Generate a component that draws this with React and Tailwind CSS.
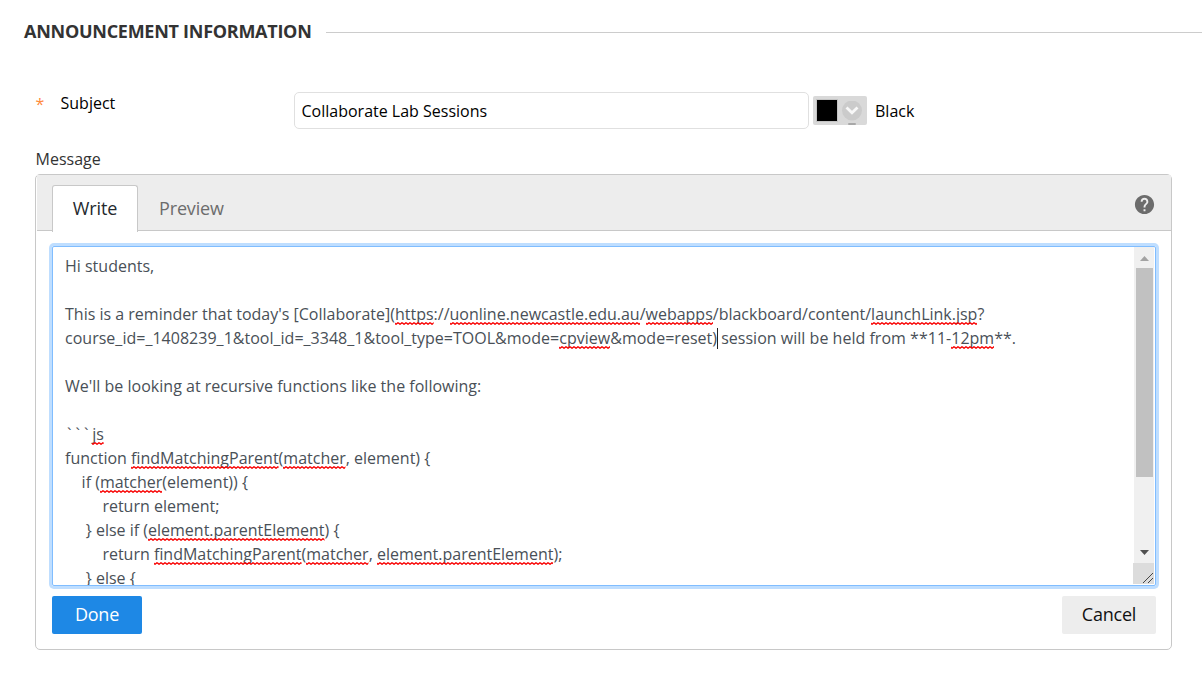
import React from "react";
import { MdHelp } from "react-icons/md";

// Each line: indent / tracking classes plus text segments; bad = flagged by the spell checker.
const bad = (t) => ({ t, bad: true });
const LINES = [
  { c: "", s: ["Hi students,"] },
  { c: "", s: [] },
  {
    c: "",
    s: ["This is a reminder that today's [Collaborate](", bad("https"), "://", bad("uonline.newcastle.edu.au"), "/", bad("webapps"), "/blackboard/content/", bad("launchLink.jsp"), "?"],
  },
  {
    c: "tracking-[0.018px]",
    s: ["course_id=_1408239_1&tool_id=_3348_1&tool_type=TOOL&mode=", bad("cpview"), "&mode=reset)", { caret: true }, " session will be held from **11-", bad("12pm"), "**."],
  },
  { c: "", s: [] },
  { c: "tracking-[0.01px]", s: ["We'll be looking at recursive functions like the following:"] },
  { c: "", s: [] },
  { c: "", s: [{ ticks: "```" }, bad("js")] },
  { c: "", s: ["function ", bad("findMatchingParent"), "(", bad("matcher"), ", element) {"] },
  { c: "pl-[16.6px]", s: ["if (", bad("matcher"), "(element)) {"] },
  { c: "pl-[37.4px]", s: ["return element;"] },
  { c: "pl-[20.8px]", s: ["} else if (", bad("element.parentElement"), ") {"] },
  { c: "pl-[37.4px]", s: ["return ", bad("findMatchingParent"), "(", bad("matcher"), ", ", bad("element.parentElement"), ");"] },
  { c: "pl-[20.8px]", s: ["} else {"] },
];

function Misspelled({ children }) {
  return (
    <span className="relative">
      {children}
      <svg className="absolute bottom-0 left-0 h-[3px] w-full" aria-hidden="true">
        <rect width="100%" height="3" fill="url(#squiggle)" />
      </svg>
    </span>
  );
}

function Segment({ seg }) {
  if (typeof seg === "string") return seg;
  if (seg.caret) return <span className="-mr-px inline-block h-[21px] w-px bg-[#222] align-[-5px]" />;
  if (seg.ticks) return <span className="pl-[2px] tracking-[4px]">{seg.ticks}</span>;
  return <Misspelled>{seg.t}</Misspelled>;
}

function Scrollbar() {
  return (
    <div className="flex w-[21px] shrink-0 flex-col items-end pr-px">
      <div className="flex h-[316px] w-[20px] flex-col items-center bg-[#f0f0f0]">
        <div className="flex h-[21px] items-center pt-[2px]">
          <svg width="9" height="5" viewBox="0 0 9 5" fill="#a3a3a3"><path d="M4.500 0 9 5H0z" /></svg>
        </div>
        <div className="h-[209px] w-[17px] bg-[#c1c1c1]" />
        <div className="mt-auto flex h-[22px] items-center pt-px">
          <svg width="9" height="5" viewBox="0 0 9 5" fill="#505050"><path d="M0 0h9L4.500 5z" /></svg>
        </div>
      </div>
      <div className="flex h-[21px] w-[21px] items-end justify-end bg-[#dcdcdc] p-px">
        <svg width="10" height="10" viewBox="0 0 10 10" stroke="#444" strokeWidth="1" shapeRendering="crispEdges">
          <path d="M0 10 10 0M5 10l5-5" />
        </svg>
      </div>
    </div>
  );
}

export default function App() {
  return (
    <div className="h-[676px] w-[1202px] overflow-hidden bg-white font-['Open_Sans',sans-serif] text-black">
      <svg className="absolute h-0 w-0" aria-hidden="true">
        <defs>
          <pattern id="squiggle" width="4" height="3" patternUnits="userSpaceOnUse">
            <path d="M-1 .5 1 2.300 3 .7 5 2.300" fill="none" stroke="#f80000" strokeWidth="1.3" />
          </pattern>
        </defs>
      </svg>

      <div className="flex items-center pl-6 pt-[18px]">
        <h2 className="w-[302px] whitespace-nowrap text-[18px] font-bold leading-[26px] tracking-[-0.27px] text-[#333]">ANNOUNCEMENT INFORMATION</h2>
        <div className="mt-[3px] h-px flex-1 bg-[#ccc]" />
      </div>

      <div className="mt-[48px] flex pl-[35px]">
        <div className="flex w-[259px] leading-[22px]">
          <span className="w-[25px] pl-[0.500px] pt-px text-[16px] text-[#ff8a3c]">*</span>
          <label className="pl-[0.500px] text-[16px]">Subject</label>
        </div>
        <div className="flex h-[37px] w-[515px] items-center rounded-[5px] border border-[#e0e0e0] pl-[6.500px] text-[16px]">Collaborate Lab Sessions</div>
        <div className="ml-1 mt-1 flex h-[29px] w-[54px] items-center rounded-[2px] bg-[#d9d9d9] pl-[3px]">
          <div className="h-[23px] w-[22px] border border-[#c4c4c4] bg-black" />
          <div className="relative ml-1">
            <svg width="20" height="20" viewBox="0 0 20 20" className="block">
              <circle cx="10" cy="9.500" r="10" fill="#cbcbcb" />
              <path d="m4.500 6.500 5.500 5.200L15.500 6.500" fill="none" stroke="#f8f8f8" strokeWidth="2.800" />
            </svg>
            <div className="absolute -bottom-[4px] left-[6px] h-[2px] w-[8px] rounded-full bg-[#a8a8a8]" />
          </div>
        </div>
        <span className="ml-2 text-[16px] leading-[38px]">Black</span>
      </div>

      <div className="mt-[17px] pl-[35.500px] text-[16px] leading-6 text-[#333]">Message</div>

      <div className="ml-[35px] mt-[3px] flex h-[476px] w-[1137px] flex-col rounded-[5px] border border-[#c8c8c8]">
        <div className="ml-px flex h-[56px] shrink-0 border-b border-[#c8c8c8] bg-[#ededed] pl-[15px] pt-[10px]">
          <div className="h-[47px] w-[86px] rounded-t-[3px] border border-b-0 border-[#c8c8c8] bg-white text-center text-[18px] leading-[44px] tracking-[-0.150px] text-[#24292e]">Write</div>
          <div className="pl-[21px] text-[18px] leading-[46px] tracking-[-0.150px] text-[#6c6c6c]">Preview</div>
          <MdHelp className="ml-auto mr-[15px] mt-[8px] size-[23px] text-[#6c6c6c]" />
        </div>

        <div className="ml-4 mr-[15px] mt-[15px] flex h-[340px] shrink-0 rounded-[2px] border border-[#80bdff] shadow-[0_0_0_3px_#bfdeff]">
          <div className="h-[338px] flex-1 overflow-hidden whitespace-pre pl-3 pt-[7px] text-[16px] leading-6 text-[#495057]">
            {LINES.map((line, i) => (
              <div key={i} className={`h-6 ${line.c}`}>
                {line.s.map((seg, j) => <Segment key={j} seg={seg} />)}
              </div>
            ))}
          </div>
          <Scrollbar />
        </div>

        <div className="ml-4 mr-[15px] mt-[10px] flex justify-between">
          <button className="h-[38px] w-[90px] rounded-[2px] bg-[#1e88e5] pb-[2px] text-[18px] tracking-[-0.200px] text-white">Done</button>
          <button className="h-[38px] w-[94px] rounded-[2px] bg-[#ededed] pb-[2px] text-[18px] tracking-[-0.200px] text-[#111]">Cancel</button>
        </div>
      </div>
    </div>
  );
}
